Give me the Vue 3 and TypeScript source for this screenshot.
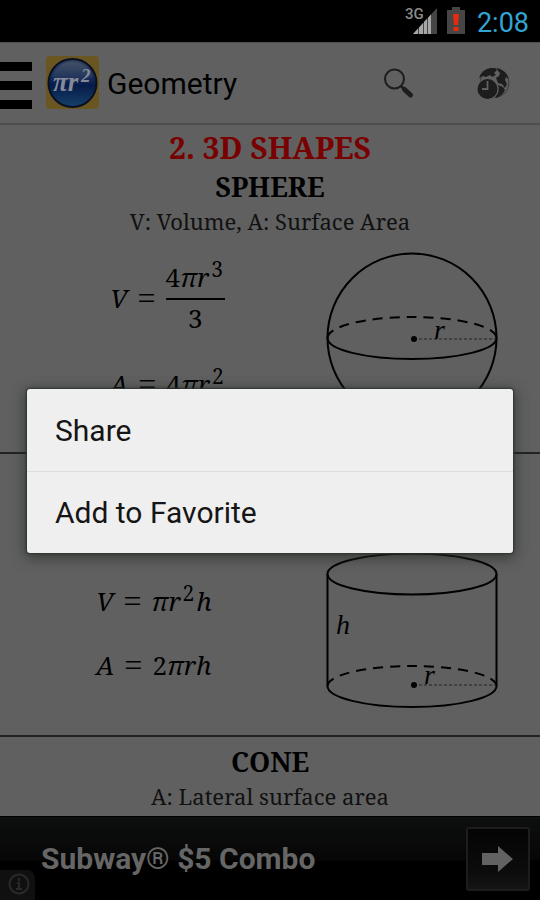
<script setup lang="ts">
interface Choice {
  id: string
  label: string
}

const choices: Choice[] = [
  { id: 'share', label: 'Share' },
  { id: 'favorite', label: 'Add to Favorite' },
]
</script>

<template>
  <div class="screen">
    <header class="status">
      <svg class="signal" width="34" height="30" viewBox="0 0 34 30" aria-hidden="true">
        <text x="0" y="13" class="network">3G</text>
        <path d="M8 28 L32 2 V28 Z" fill="#454545" />
        <path d="M8 28 L13 22.500 V28 Z M14 28 V21.500 L18 17 V28 Z M19 28 V16 L22 12.700 V28 Z M23 28 V11.700 L26 8.500 V28 Z" fill="#a6a6a6" />
      </svg>
      <svg class="battery" width="18" height="28" viewBox="0 0 18 28" aria-hidden="true">
        <path d="M0 3 H5 V0 H13 V3 H18 V27 H0 Z" fill="#454545" />
        <path d="M6 7 H12 L11 18 H7 Z M6.500 20 H11.500 V24 H6.500 Z" fill="#e62a10" />
      </svg>
      <time class="clock">2:08</time>
    </header>

    <nav class="bar">
      <button class="menu" aria-label="Menu"><i></i><i></i><i></i></button>
      <svg class="logo" width="54" height="54" viewBox="0 0 54 54" aria-hidden="true">
        <defs>
          <linearGradient id="ball" x1="0" y1="0" x2="0" y2="1">
            <stop offset="0" stop-color="#36445f" />
            <stop offset="0.4" stop-color="#122a5a" />
            <stop offset="0.55" stop-color="#061b4a" />
            <stop offset="1" stop-color="#164269" />
          </linearGradient>
          <linearGradient id="gloss" x1="0" y1="0" x2="0" y2="1">
            <stop offset="0" stop-color="#515a6b" />
            <stop offset="1" stop-color="#20335c" />
          </linearGradient>
        </defs>
        <rect x="0" y="0" width="53" height="53" rx="4" fill="#6a5620" />
        <circle cx="26.500" cy="27" r="24" fill="url(#ball)" stroke="#0a1022" stroke-width="2" />
        <path d="M6 21 A21.500 21.500 0 0 1 47 21 Q27 29 6 21 Z" fill="url(#gloss)" opacity="0.6" />
        <text x="7" y="35" class="logo-text">πr</text>
        <text x="35" y="26" class="logo-power">2</text>
      </svg>
      <h1 class="name">Geometry</h1>
      <button class="tool" aria-label="Search">
        <svg width="36" height="36" viewBox="0 0 36 36" aria-hidden="true">
          <circle cx="13.500" cy="14" r="9.500" fill="none" stroke="#1d1d1d" stroke-width="2" />
          <path d="M20 21 L23 24" stroke="#1d1d1d" stroke-width="2.500" />
          <path d="M23.500 24.500 L29.500 30" stroke="#1d1d1d" stroke-width="5" stroke-linecap="round" />
        </svg>
      </button>
      <button class="tool" aria-label="History">
        <svg width="36" height="36" viewBox="0 0 36 36" aria-hidden="true">
          <circle cx="19.500" cy="18" r="14.500" fill="none" stroke="#3c3c3c" stroke-width="1" />
          <path d="M4 13 Q7 4 16 3 L20 3 L22 5 L19 8 L21 10 L17 12 L15 10 L11 12 L8 11 Z" fill="#1d1d1d" />
          <path d="M22 3 Q31 5 34 14 L31 12 L30 15 L32 19 L30 23 L27 19 L23 18 L21 13 L24 11 L25 8 L23 6 Z" fill="#1d1d1d" />
          <path d="M23 20 L28 22 L30 25 Q27 31 21 33 L20 32 Q25 27 23 20 Z" fill="#1d1d1d" />
          <circle cx="12.500" cy="24" r="11" fill="#606060" />
          <circle cx="12.500" cy="24" r="10" fill="#1d1d1d" />
          <path d="M12.500 16 V24 H7" fill="none" stroke="#606060" stroke-width="1.800" />
        </svg>
      </button>
    </nav>

    <main class="page">
      <section class="shape sphere">
        <h2 class="chapter">2. 3D SHAPES</h2>
        <h3 class="title">SPHERE</h3>
        <p class="note">V: Volume, A: Surface Area</p>
        <div class="body">
          <div class="formulas">
            <div class="formula">
              <span><i>V</i></span><span class="equals">=</span>
              <span class="fraction">
                <span class="top">4<i>πr</i><sup>3</sup></span>
                <span>3</span>
              </span>
            </div>
            <div class="formula">
              <span><i>A</i></span><span class="equals">=</span><span>4<i>πr</i><sup>2</sup></span>
            </div>
          </div>
          <svg class="figure" width="180" height="190" viewBox="0 0 180 190" aria-hidden="true">
            <g fill="none" stroke="#000" stroke-width="2">
              <circle cx="90" cy="95" r="84.500" />
              <path d="M5.500 95 A84.500 21 0 0 0 174.500 95" />
              <path d="M5.500 95 A84.500 21 0 0 1 174.500 95" stroke-dasharray="10 7" />
              <path d="M92 96 H174" stroke="#222" stroke-width="1" stroke-dasharray="3 2" />
            </g>
            <circle cx="92" cy="96" r="3" />
            <text x="112" y="96" class="mark">r</text>
          </svg>
        </div>
      </section>

      <section class="shape cylinder">
        <div class="body">
          <div class="formulas">
            <div class="formula">
              <span><i>V</i></span><span class="equals">=</span><span><i>πr</i><sup>2</sup><i>h</i></span>
            </div>
            <div class="formula">
              <span><i>A</i></span><span class="equals">=</span><span>2<i>πrh</i></span>
            </div>
          </div>
          <svg class="figure" width="180" height="160" viewBox="0 0 180 160" aria-hidden="true">
            <g fill="none" stroke="#000" stroke-width="2">
              <ellipse cx="90" cy="24" rx="84.500" ry="20.500" />
              <path d="M5.500 24 V136 A84.500 21 0 0 0 174.500 136 V24" />
              <path d="M5.500 136 A84.500 20 0 0 1 174.500 136" stroke-dasharray="10 7" />
              <path d="M92 135 H174" stroke="#222" stroke-width="1" stroke-dasharray="3 2" />
            </g>
            <circle cx="92" cy="135" r="3" />
            <text x="14" y="84" class="mark">h</text>
            <text x="102" y="134" class="mark">r</text>
          </svg>
        </div>
      </section>

      <section class="shape cone">
        <h3 class="title">CONE</h3>
        <p class="note">A: Lateral surface area</p>
      </section>
    </main>

    <footer class="ad">
      <svg class="info" width="36" height="30" viewBox="0 0 36 30" aria-hidden="true">
        <path d="M0 0 H28 Q35 1 35 10 V30 H0 Z" fill="#101010" />
        <circle cx="19" cy="14" r="9.500" fill="none" stroke="#2a2a2a" stroke-width="2" />
        <path d="M19 8 V11 M17 13 H19 V19 M16 19 H22" fill="none" stroke="#2a2a2a" stroke-width="2" />
      </svg>
      <strong class="offer">Subway® $5 Combo</strong>
      <button class="go" aria-label="Open offer">
        <svg width="32" height="28" viewBox="0 0 32 28" aria-hidden="true">
          <path d="M0 8 H16 V1 L31 14 L16 27 V20 H0 Z" fill="#626262" />
        </svg>
      </button>
    </footer>

    <div class="overlay">
      <div class="dialog" role="dialog" aria-label="Options">
        <button v-for="choice in choices" :key="choice.id" class="choice">{{ choice.label }}</button>
      </div>
    </div>
  </div>
</template>

<style>
body {
  background: #000;
}
</style>

<style scoped>
* {
  box-sizing: border-box;
}
button {
  border: 0;
  padding: 0;
  background: none;
  color: inherit;
  font: inherit;
}
svg {
  display: block;
}
.screen {
  position: relative;
  display: flex;
  flex-direction: column;
  height: 100vh;
  overflow: hidden;
  background: #606060;
  color: #000;
  font-family: Roboto, "Liberation Sans", sans-serif;
}
.status {
  display: flex;
  align-items: center;
  justify-content: flex-end;
  height: 42px;
  flex: none;
  padding-right: 11px;
  background: #000;
}
.signal {
  margin-right: 8px;
}
.network {
  font: 500 15px Roboto, sans-serif;
  fill: #8c8c8c;
}
.battery {
  margin-right: 12px;
}
.clock {
  padding-top: 4px;
  color: #33a4d2;
  font-size: 27px;
  line-height: 40px;
}
.bar {
  display: flex;
  align-items: center;
  height: 83px;
  flex: none;
  border-top: 1px solid #505050;
  border-bottom: 2px solid #4e4e4e;
  background: #606060;
}
.menu {
  display: grid;
  gap: 10px;
  width: 32px;
  margin: 4px 14px 0 0;
}
.menu i {
  height: 9px;
  background: #000;
}
.logo {
  margin-right: 7px;
}
.logo-text {
  font: italic 700 27px "Liberation Serif", serif;
  fill: #858a96;
}
.logo-power {
  font: italic 700 19px "Liberation Serif", serif;
  fill: #858a96;
}
.name {
  flex: 1;
  margin: 0;
  font-size: 30px;
  font-weight: 400;
}
.tool {
  display: grid;
  place-items: center;
  width: 94px;
  height: 80px;
}
.page {
  flex: 1;
  min-height: 0;
  overflow: hidden;
  font-family: "Noto Serif", "Droid Serif", "DejaVu Serif Condensed", "DejaVu Serif", serif;
  text-align: center;
}
.shape {
  border-bottom: 2px solid #222;
}
.sphere {
  height: 329px;
  padding-top: 3px;
}
.cylinder {
  height: 283px;
  padding-top: 96px;
}
.cone {
  border-bottom: 0;
  padding-top: 6px;
}
.chapter,
.title,
.note {
  margin: 0;
}
.chapter {
  color: #780000;
  font-size: 30px;
  line-height: 40px;
}
.title {
  font-size: 27px;
  line-height: 37px;
}
.note {
  color: #111;
  font-size: 22px;
  line-height: 32px;
}
.body {
  display: flex;
  justify-content: space-between;
  align-items: flex-start;
  padding: 0 38px 0 96px;
}
.sphere .body {
  padding-top: 6px;
}
.formulas {
  display: grid;
  gap: 32px;
  font-size: 26px;
  line-height: 32px;
}
.sphere .formulas {
  padding: 16px 0 0 14px;
}
.cylinder .formulas {
  padding-top: 35px;
}
.formula {
  display: flex;
  align-items: center;
  gap: 10px;
}
.equals {
  font-family: "Liberation Serif", serif;
  font-size: 32px;
}
.fraction {
  display: grid;
  line-height: 36px;
}
.top {
  padding-bottom: 3px;
  border-bottom: 2px solid #000;
}
sup {
  padding: 0 2px;
  font-size: 21px;
  line-height: 0;
}
.mark {
  font: italic 28px "Liberation Serif", serif;
}
.ad {
  position: relative;
  display: flex;
  align-items: center;
  justify-content: space-between;
  height: 84px;
  flex: none;
  padding: 0 10px 0 41px;
  border-top: 1px solid #000;
  background: linear-gradient(#0d100e, #060606 52%, #000 53%);
}
.info {
  position: absolute;
  left: 0;
  bottom: 0;
}
.offer {
  color: #666;
  font-size: 30px;
  line-height: 36px;
}
.go {
  display: grid;
  place-items: center;
  width: 64px;
  height: 64px;
  border: 2px solid #1d1d1d;
  border-radius: 3px;
  background: linear-gradient(#040404, #0c0c0c 70%, #151515);
}
.overlay {
  position: absolute;
  inset: 42px 0 0;
  display: flex;
  align-items: center;
  padding: 0 27px;
}
.dialog {
  flex: 1;
  overflow: hidden;
  border-radius: 3px;
  background: #efefef;
  box-shadow: 0 0 2px 1px #303430, 0 3px 14px 2px rgb(35 45 38 / 70%);
}
.choice {
  display: block;
  width: 100%;
  height: 82px;
  padding-left: 28px;
  color: #151515;
  font-size: 30px;
  text-align: left;
}
.choice + .choice {
  border-top: 1px solid #dcdcdc;
}
</style>
